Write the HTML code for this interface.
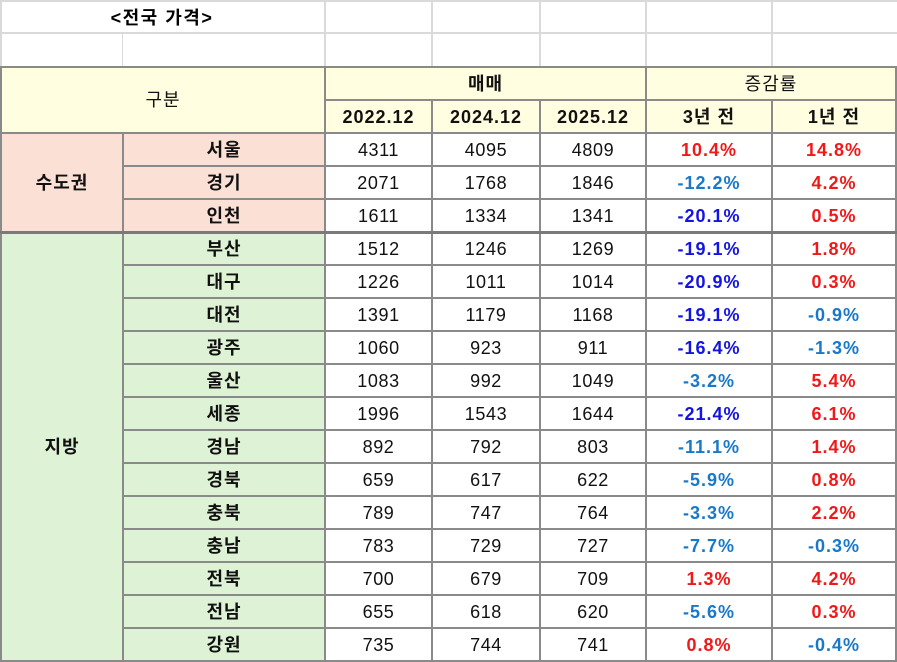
<!DOCTYPE html>
<html><head><meta charset="utf-8">
<style>
body{margin:0;width:897px;height:662px;background:#fff;overflow:hidden;font-family:"Liberation Sans","Noto Sans CJK KR",sans-serif;position:relative}
.g{position:absolute;background:#dadada}
table{position:absolute;left:0;top:66px;border-collapse:collapse;table-layout:fixed;width:895px}
td{border:2px solid #8a8a8a;text-align:center;padding:0;font-size:18px;color:#111;height:31px;line-height:20px;overflow:hidden;white-space:nowrap;letter-spacing:0.6px}
.h{background:#FFFEE0;font-weight:bold;letter-spacing:1px}
.p{background:#FBE0D6;font-weight:bold;letter-spacing:1px}
.gr{background:#DEF2D5;font-weight:bold;letter-spacing:1px}
.r{color:#f01818;font-weight:bold;letter-spacing:1px}
.b{color:#1414e0;font-weight:bold;letter-spacing:1px}
.l{color:#1a78c8;font-weight:bold;letter-spacing:1px}
.sep td{border-top:3px solid #7a7a7a;height:30px}
.t{position:absolute;left:0;top:4px;width:324px;text-align:center;font-weight:bold;font-size:18px;letter-spacing:1.5px}
</style></head><body>
<div class="g" style="left:0;top:0;width:897px;height:2px"></div>
<div class="g" style="left:0;top:32px;width:897px;height:2px"></div>
<div class="g" style="left:0;top:0;width:2px;height:66px"></div>
<div class="g" style="left:122px;top:34px;width:1px;height:32px"></div>
<div class="g" style="left:324px;top:0;width:2px;height:66px"></div>
<div class="g" style="left:431px;top:0;width:2px;height:66px"></div>
<div class="g" style="left:539px;top:0;width:2px;height:66px"></div>
<div class="g" style="left:645px;top:0;width:2px;height:66px"></div>
<div class="g" style="left:771px;top:0;width:2px;height:66px"></div>
<div class="t">&lt;전국 가격&gt;</div>
<table>
<colgroup><col style="width:122px"><col style="width:202px"><col style="width:107px"><col style="width:108px"><col style="width:106px"><col style="width:126px"><col style="width:124px"></colgroup>
<tr><td class="h" colspan="2" rowspan="2" style="font-weight:normal">구분</td><td class="h" colspan="3">매매</td><td class="h" colspan="2" style="font-weight:normal">증감률</td></tr>
<tr><td class="h">2022.12</td><td class="h">2024.12</td><td class="h">2025.12</td><td class="h">3년 전</td><td class="h">1년 전</td></tr>
<tr><td class="p" rowspan="3">수도권</td><td class="p">서울</td><td>4311</td><td>4095</td><td>4809</td><td class="r">10.4%</td><td class="r">14.8%</td></tr>
<tr><td class="p">경기</td><td>2071</td><td>1768</td><td>1846</td><td class="l">-12.2%</td><td class="r">4.2%</td></tr>
<tr><td class="p">인천</td><td>1611</td><td>1334</td><td>1341</td><td class="b">-20.1%</td><td class="r">0.5%</td></tr>
<tr class="sep"><td class="gr" rowspan="13">지방</td><td class="gr">부산</td><td>1512</td><td>1246</td><td>1269</td><td class="b">-19.1%</td><td class="r">1.8%</td></tr>
<tr><td class="gr">대구</td><td>1226</td><td>1011</td><td>1014</td><td class="b">-20.9%</td><td class="r">0.3%</td></tr>
<tr><td class="gr">대전</td><td>1391</td><td>1179</td><td>1168</td><td class="b">-19.1%</td><td class="l">-0.9%</td></tr>
<tr><td class="gr">광주</td><td>1060</td><td>923</td><td>911</td><td class="b">-16.4%</td><td class="l">-1.3%</td></tr>
<tr><td class="gr">울산</td><td>1083</td><td>992</td><td>1049</td><td class="l">-3.2%</td><td class="r">5.4%</td></tr>
<tr><td class="gr">세종</td><td>1996</td><td>1543</td><td>1644</td><td class="b">-21.4%</td><td class="r">6.1%</td></tr>
<tr><td class="gr">경남</td><td>892</td><td>792</td><td>803</td><td class="l">-11.1%</td><td class="r">1.4%</td></tr>
<tr><td class="gr">경북</td><td>659</td><td>617</td><td>622</td><td class="l">-5.9%</td><td class="r">0.8%</td></tr>
<tr><td class="gr">충북</td><td>789</td><td>747</td><td>764</td><td class="l">-3.3%</td><td class="r">2.2%</td></tr>
<tr><td class="gr">충남</td><td>783</td><td>729</td><td>727</td><td class="l">-7.7%</td><td class="l">-0.3%</td></tr>
<tr><td class="gr">전북</td><td>700</td><td>679</td><td>709</td><td class="r">1.3%</td><td class="r">4.2%</td></tr>
<tr><td class="gr">전남</td><td>655</td><td>618</td><td>620</td><td class="l">-5.6%</td><td class="r">0.3%</td></tr>
<tr><td class="gr">강원</td><td>735</td><td>744</td><td>741</td><td class="r">0.8%</td><td class="l">-0.4%</td></tr>
</table>
</body></html>
